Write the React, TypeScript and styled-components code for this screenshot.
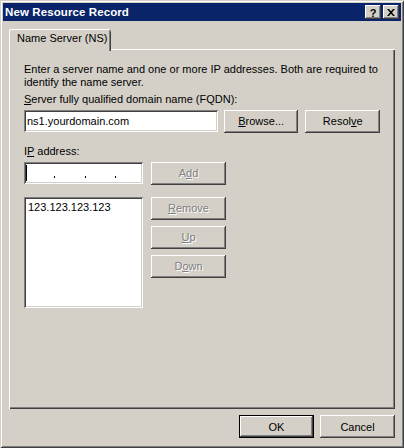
import React from 'react';
import styled, { createGlobalStyle } from 'styled-components';

const Global = createGlobalStyle`
  html, body { margin: 0; padding: 0; background: #D4D0C8; }
  body { font-family: "Liberation Sans", Arial, sans-serif; font-size: 11px; color: #000; }
  * { box-sizing: border-box; }
`;

const raised = `
  box-shadow: inset -1px -1px 0 #404040, inset 1px 1px 0 #FFFFFF,
    inset -2px -2px 0 #808080, inset 2px 2px 0 #D4D0C8;
`;

const sunken = `
  background: #FFFFFF;
  box-shadow: inset 1px 1px 0 #808080, inset -1px -1px 0 #FFFFFF,
    inset 2px 2px 0 #404040, inset -2px -2px 0 #D4D0C8;
`;

const Window = styled.div`
  width: 404px;
  height: 448px;
  background: #D4D0C8;
  padding: 3px;
  display: flex;
  flex-direction: column;
  box-shadow: inset 1px 1px 0 #D4D0C8, inset -1px -1px 0 #404040,
    inset 2px 2px 0 #FFFFFF, inset -2px -2px 0 #808080;
`;

const Caption = styled.div`
  height: 18px;
  background: #0A246A;
  display: flex;
  align-items: center;
  padding: 0 2px 0 2px;
`;

const CaptionTitle = styled.span`
  flex: 1;
  color: #FFFFFF;
  font-weight: bold;
  font-size: 11.5px;
  letter-spacing: 0.1px;
  white-space: nowrap;
`;

const CaptionButtons = styled.div`
  display: flex;
  gap: 2px;
`;

const CaptionButton = styled.div`
  width: 16px;
  height: 14px;
  background: #D4D0C8;
  ${raised}
  display: flex;
  align-items: center;
  justify-content: center;
  font-weight: bold;
  font-size: 11px;
  line-height: 14px;
  padding-top: 1px;
`;

const Body = styled.div`
  display: flex;
  flex-direction: column;
  padding: 8px 6px 0 6px;
`;

const TabStrip = styled.div`
  height: 20px;
  display: flex;
`;

const Tab = styled.div`
  position: relative;
  z-index: 1;
  width: 102px;
  height: 22px;
  background: #D4D0C8;
  border-radius: 2px 2px 0 0;
  box-shadow: inset 1px 0 0 #FFFFFF, inset 0 1px 0 #FFFFFF,
    inset -1px 0 0 #404040, inset -2px 0 0 #808080;
  padding: 3px 0 0 8px;
  line-height: 13px;
  white-space: nowrap;
`;

const Panel = styled.div`
  height: 360px;
  background: #D4D0C8;
  box-shadow: inset 1px 1px 0 #FFFFFF, inset -1px -1px 0 #404040,
    inset -2px -2px 0 #808080;
  padding: 14px 15px;
  display: flex;
  flex-direction: column;
  line-height: 13px;
`;

const Intro = styled.div`
  white-space: nowrap;
`;

const Label = styled.div<{ $mt: number }>`
  margin-top: ${(p) => p.$mt}px;
  white-space: nowrap;
`;

const Row = styled.div<{ $mt: number }>`
  margin-top: ${(p) => p.$mt}px;
  display: flex;
  align-items: flex-start;
`;

const TextField = styled.div<{ $w: number }>`
  width: ${(p) => p.$w}px;
  height: 22px;
  ${sunken}
  padding: 0 3px;
  display: flex;
  align-items: center;
  white-space: nowrap;
`;

const IpField = styled.div`
  width: 119px;
  height: 22px;
  ${sunken}
  padding: 3px 2px;
  display: grid;
  grid-template-columns: 28px 2px 29px 2px 28px 2px 1fr;
  align-items: end;
`;

const Caret = styled.div`
  width: 1px;
  height: 16px;
  background: #000;
`;

const Dot = styled.div`
  width: 1px;
  height: 2px;
  background: #000;
  margin-bottom: 3px;
`;

const ListBox = styled.div`
  width: 119px;
  height: 111px;
  ${sunken}
  padding: 4px 4px;
  white-space: nowrap;
`;

const Button = styled.div<{ $ml?: number; $disabled?: boolean }>`
  width: 75px;
  height: 23px;
  margin-left: ${(p) => p.$ml ?? 0}px;
  background: #D4D0C8;
  ${raised}
  display: flex;
  align-items: center;
  justify-content: center;
  white-space: nowrap;
  color: ${(p) => (p.$disabled ? '#808080' : '#000')};
  text-shadow: ${(p) => (p.$disabled ? '1px 1px 0 #FFFFFF' : 'none')};
`;

const DefaultButton = styled(Button)`
  border: 1px solid #000;
`;

const ButtonColumn = styled.div`
  display: flex;
  flex-direction: column;
  gap: 6px;
  margin-left: 8px;
`;

const Footer = styled.div`
  display: flex;
  justify-content: flex-end;
  gap: 6px;
  padding-top: 6px;
`;

export default function App() {
  return (
    <>
      <Global />
      <Window>
        <Caption>
          <CaptionTitle>New Resource Record</CaptionTitle>
          <CaptionButtons>
            <CaptionButton>?</CaptionButton>
            <CaptionButton>
              <svg width="8" height="7" viewBox="0 0 8 7">
                <path d="M0 0h2l2 2.2L6 0h2L5 3.5 8 7H6L4 4.8 2 7H0l3-3.5z" fill="#000" />
              </svg>
            </CaptionButton>
          </CaptionButtons>
        </Caption>
        <Body>
          <TabStrip>
            <Tab>Name Server (NS)</Tab>
          </TabStrip>
          <Panel>
            <Intro>
              Enter a server name and one or more IP addresses. Both are required to
              <br />
              identify the name server.
            </Intro>
            <Label $mt={4}>
              <u>S</u>erver fully qualified domain name (FQDN):
            </Label>
            <Row $mt={4}>
              <TextField $w={195}>ns1.yourdomain.com</TextField>
              <Button $ml={6}>
                <span>
                  <u>B</u>rowse...
                </span>
              </Button>
              <Button $ml={7}>
                <span>
                  Resol<u>v</u>e
                </span>
              </Button>
            </Row>
            <Label $mt={12}>
              I<u>P</u> address:
            </Label>
            <Row $mt={4}>
              <IpField>
                <Caret />
                <Dot />
                <div />
                <Dot />
                <div />
                <Dot />
                <div />
              </IpField>
              <Button $ml={8} $disabled>
                <span>
                  A<u>d</u>d
                </span>
              </Button>
            </Row>
            <Row $mt={12}>
              <ListBox>123.123.123.123</ListBox>
              <ButtonColumn>
                <Button $disabled>
                  <span>
                    <u>R</u>emove
                  </span>
                </Button>
                <Button $disabled>
                  <span>
                    <u>U</u>p
                  </span>
                </Button>
                <Button $disabled>
                  <span>
                    D<u>o</u>wn
                  </span>
                </Button>
              </ButtonColumn>
            </Row>
          </Panel>
          <Footer>
            <DefaultButton>OK</DefaultButton>
            <Button>Cancel</Button>
          </Footer>
        </Body>
      </Window>
    </>
  );
}
